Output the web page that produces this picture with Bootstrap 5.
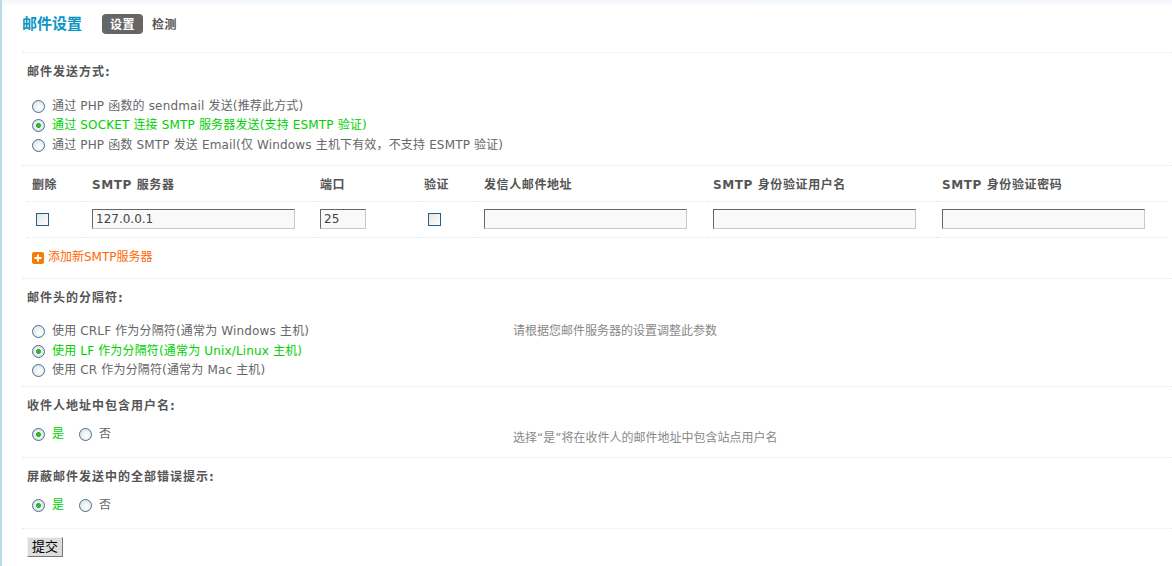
<!DOCTYPE html>
<html lang="zh-CN">
<head>
<meta charset="utf-8">
<title>邮件设置</title>
<link rel="stylesheet" href="https://cdn.jsdelivr.net/npm/bootstrap@5.3.0/dist/css/bootstrap.min.css">
<style>
html,body{height:100%}
body{font-family:"DejaVu Sans","Noto Sans CJK SC",sans-serif;font-size:12px;color:#666;background:#fff;line-height:19.5px;overflow:hidden}
.shell{border-left:2px solid #bcd9ec;min-height:566px;background:linear-gradient(#eef5fb,#fff 6px);padding-left:20px}
.cap{height:53px;border-bottom:1px dotted #d8ecf8;padding-top:14px}
.cap-title{font-size:15px;font-weight:700;color:#0a95c4;line-height:20px;margin-right:20px;width:60px;white-space:nowrap}
.pill{display:block;height:20px;line-height:22px;padding:0 8px;border-radius:4px;font-size:12px;font-weight:700;letter-spacing:.5px;color:#555;text-decoration:none}
.pill.on{background:#666;color:#fff;margin-right:1px}
.pill.off{padding-right:0}
.sect{border-bottom:1px dotted #d8ecf8;padding-left:5px}
.lbl{font-size:12px;font-weight:700;letter-spacing:1px;color:#555;line-height:18px}
.opt{display:flex;align-items:center;height:19.5px;padding-left:5px;white-space:nowrap;letter-spacing:.16px}
.opt.sel{color:#00d000}
.rd{appearance:none;-webkit-appearance:none;width:13px;height:13px;border-radius:50%;border:1.5px solid #3f6f9b;background:radial-gradient(circle at 60% 60%,#fff,#dcdcd8);margin:0 7px 0 0;flex:none}
.rd:checked{background:radial-gradient(circle,#2fb53a 0,#2fb53a 2.2px,#f0f0ec 2.8px,#dcdcd8)}
.s1{height:113px;padding-top:10px}
.s1 .lbl{margin-bottom:15.5px}
.smtp{width:1140px;margin:0;table-layout:fixed;border-collapse:collapse}
.smtp th,.smtp td{padding:0 0 0 5px;border:0;border-bottom:1px dotted #d8ecf8;background:transparent;color:#555;box-shadow:none}
.smtp th{height:35px;font-weight:700;letter-spacing:.6px;font-size:12px;vertical-align:middle;padding-top:4px}
.smtp td{height:36px;vertical-align:middle;padding-bottom:0}
.c1{width:60px}.c2{width:228px}.c3{width:104px}.c4{width:60px}.c5,.c6{width:229px}.c7{width:230px}
.ck{appearance:none;-webkit-appearance:none;display:block;width:13px;height:13px;border:1px solid #1f5f8f;background:linear-gradient(135deg,#e4e4e0,#fff);margin:0 0 0 4px}
.inp{display:block;height:20px;border:1px solid;border-color:#666 #c8c8c8 #c8c8c8 #666;background:#f9f9f9;font:12px/18px "DejaVu Sans","Noto Sans CJK SC",sans-serif;color:#444;padding:0 3px;border-radius:0;outline:0}
.w-a{width:203px}.w-b{width:46px}
.add{height:40px;display:flex;align-items:center;color:#f60;padding:0 0 0 5px;text-decoration:none}
.add svg{margin-right:4px;flex:none}
.s-add{border-bottom:1px dotted #d8ecf8;padding-left:5px}
.hint{color:#888;width:600px}
.hint2{padding-top:4px}
.left-col{width:486px;flex:none}
.s3{height:108px;padding-top:10px}
.s3 .lbl{margin-bottom:15.5px}
.s4{height:71px;padding-top:10px}
.s4 .lbl{margin-bottom:10px}
.s4 .opt{display:inline-flex;margin-right:6px}
.foot{padding:8px 0 0 5px}
.sub{display:block;width:36px;height:20px;padding:0;border:1px solid;border-color:#f4f4f4 #777 #777 #f4f4f4;background:#ddd;color:#000;font-size:13px;line-height:18px;border-radius:0}
</style>
</head>
<body>
<div class="shell">
  <div class="cap d-flex align-items-start">
    <div class="cap-title">邮件设置</div>
    <a class="pill on" href="#">设置</a>
    <a class="pill off" href="#">检测</a>
  </div>

  <div class="sect s1">
    <div class="lbl">邮件发送方式:</div>
    <label class="opt"><input class="rd" type="radio" name="a">通过 PHP 函数的 sendmail 发送(推荐此方式)</label>
    <label class="opt sel"><input class="rd" type="radio" name="a" checked>通过 SOCKET 连接 SMTP 服务器发送(支持 ESMTP 验证)</label>
    <label class="opt"><input class="rd" type="radio" name="a">通过 PHP 函数 SMTP 发送 Email(仅 Windows 主机下有效，不支持 ESMTP 验证)</label>
  </div>

  <div class="s-add">
    <table class="smtp">
      <colgroup><col class="c1"><col class="c2"><col class="c3"><col class="c4"><col class="c5"><col class="c6"><col class="c7"></colgroup>
      <tr><th>删除</th><th>SMTP 服务器</th><th>端口</th><th>验证</th><th>发信人邮件地址</th><th>SMTP 身份验证用户名</th><th>SMTP 身份验证密码</th></tr>
      <tr>
        <td><input class="ck" type="checkbox"></td>
        <td><input class="inp w-a" type="text" value="127.0.0.1"></td>
        <td><input class="inp w-b" type="text" value="25"></td>
        <td><input class="ck" type="checkbox"></td>
        <td><input class="inp w-a" type="text"></td>
        <td><input class="inp w-a" type="text"></td>
        <td><input class="inp w-a" type="text"></td>
      </tr>
    </table>
    <a class="add" href="#"><svg width="12" height="12" viewBox="0 0 12 12"><rect width="12" height="12" rx="2" fill="#f57c00"/><path d="M6 2.500v7M2.500 6h7" stroke="#fff" stroke-width="2"/></svg>添加新SMTP服务器</a>
  </div>

  <div class="sect s3">
    <div class="lbl">邮件头的分隔符:</div>
    <div class="d-flex">
      <div class="left-col">
        <label class="opt"><input class="rd" type="radio" name="b">使用 CRLF 作为分隔符(通常为 Windows 主机)</label>
        <label class="opt sel"><input class="rd" type="radio" name="b" checked>使用 LF 作为分隔符(通常为 Unix/Linux 主机)</label>
        <label class="opt"><input class="rd" type="radio" name="b">使用 CR 作为分隔符(通常为 Mac 主机)</label>
      </div>
      <div class="hint">请根据您邮件服务器的设置调整此参数</div>
    </div>
  </div>

  <div class="sect s4">
    <div class="lbl">收件人地址中包含用户名:</div>
    <div class="d-flex">
      <div class="left-col">
        <label class="opt sel"><input class="rd" type="radio" name="c" checked>是</label>
        <label class="opt"><input class="rd" type="radio" name="c">否</label>
      </div>
      <div class="hint hint2">选择“是”将在收件人的邮件地址中包含站点用户名</div>
    </div>
  </div>

  <div class="sect s4">
    <div class="lbl">屏蔽邮件发送中的全部错误提示:</div>
    <div class="d-flex">
      <div class="left-col">
        <label class="opt sel"><input class="rd" type="radio" name="d" checked>是</label>
        <label class="opt"><input class="rd" type="radio" name="d">否</label>
      </div>
    </div>
  </div>

  <div class="foot"><button class="sub" type="button">提交</button></div>
</div>
<script src="https://cdn.jsdelivr.net/npm/bootstrap@5.3.0/dist/js/bootstrap.bundle.min.js"></script>
</body>
</html>
